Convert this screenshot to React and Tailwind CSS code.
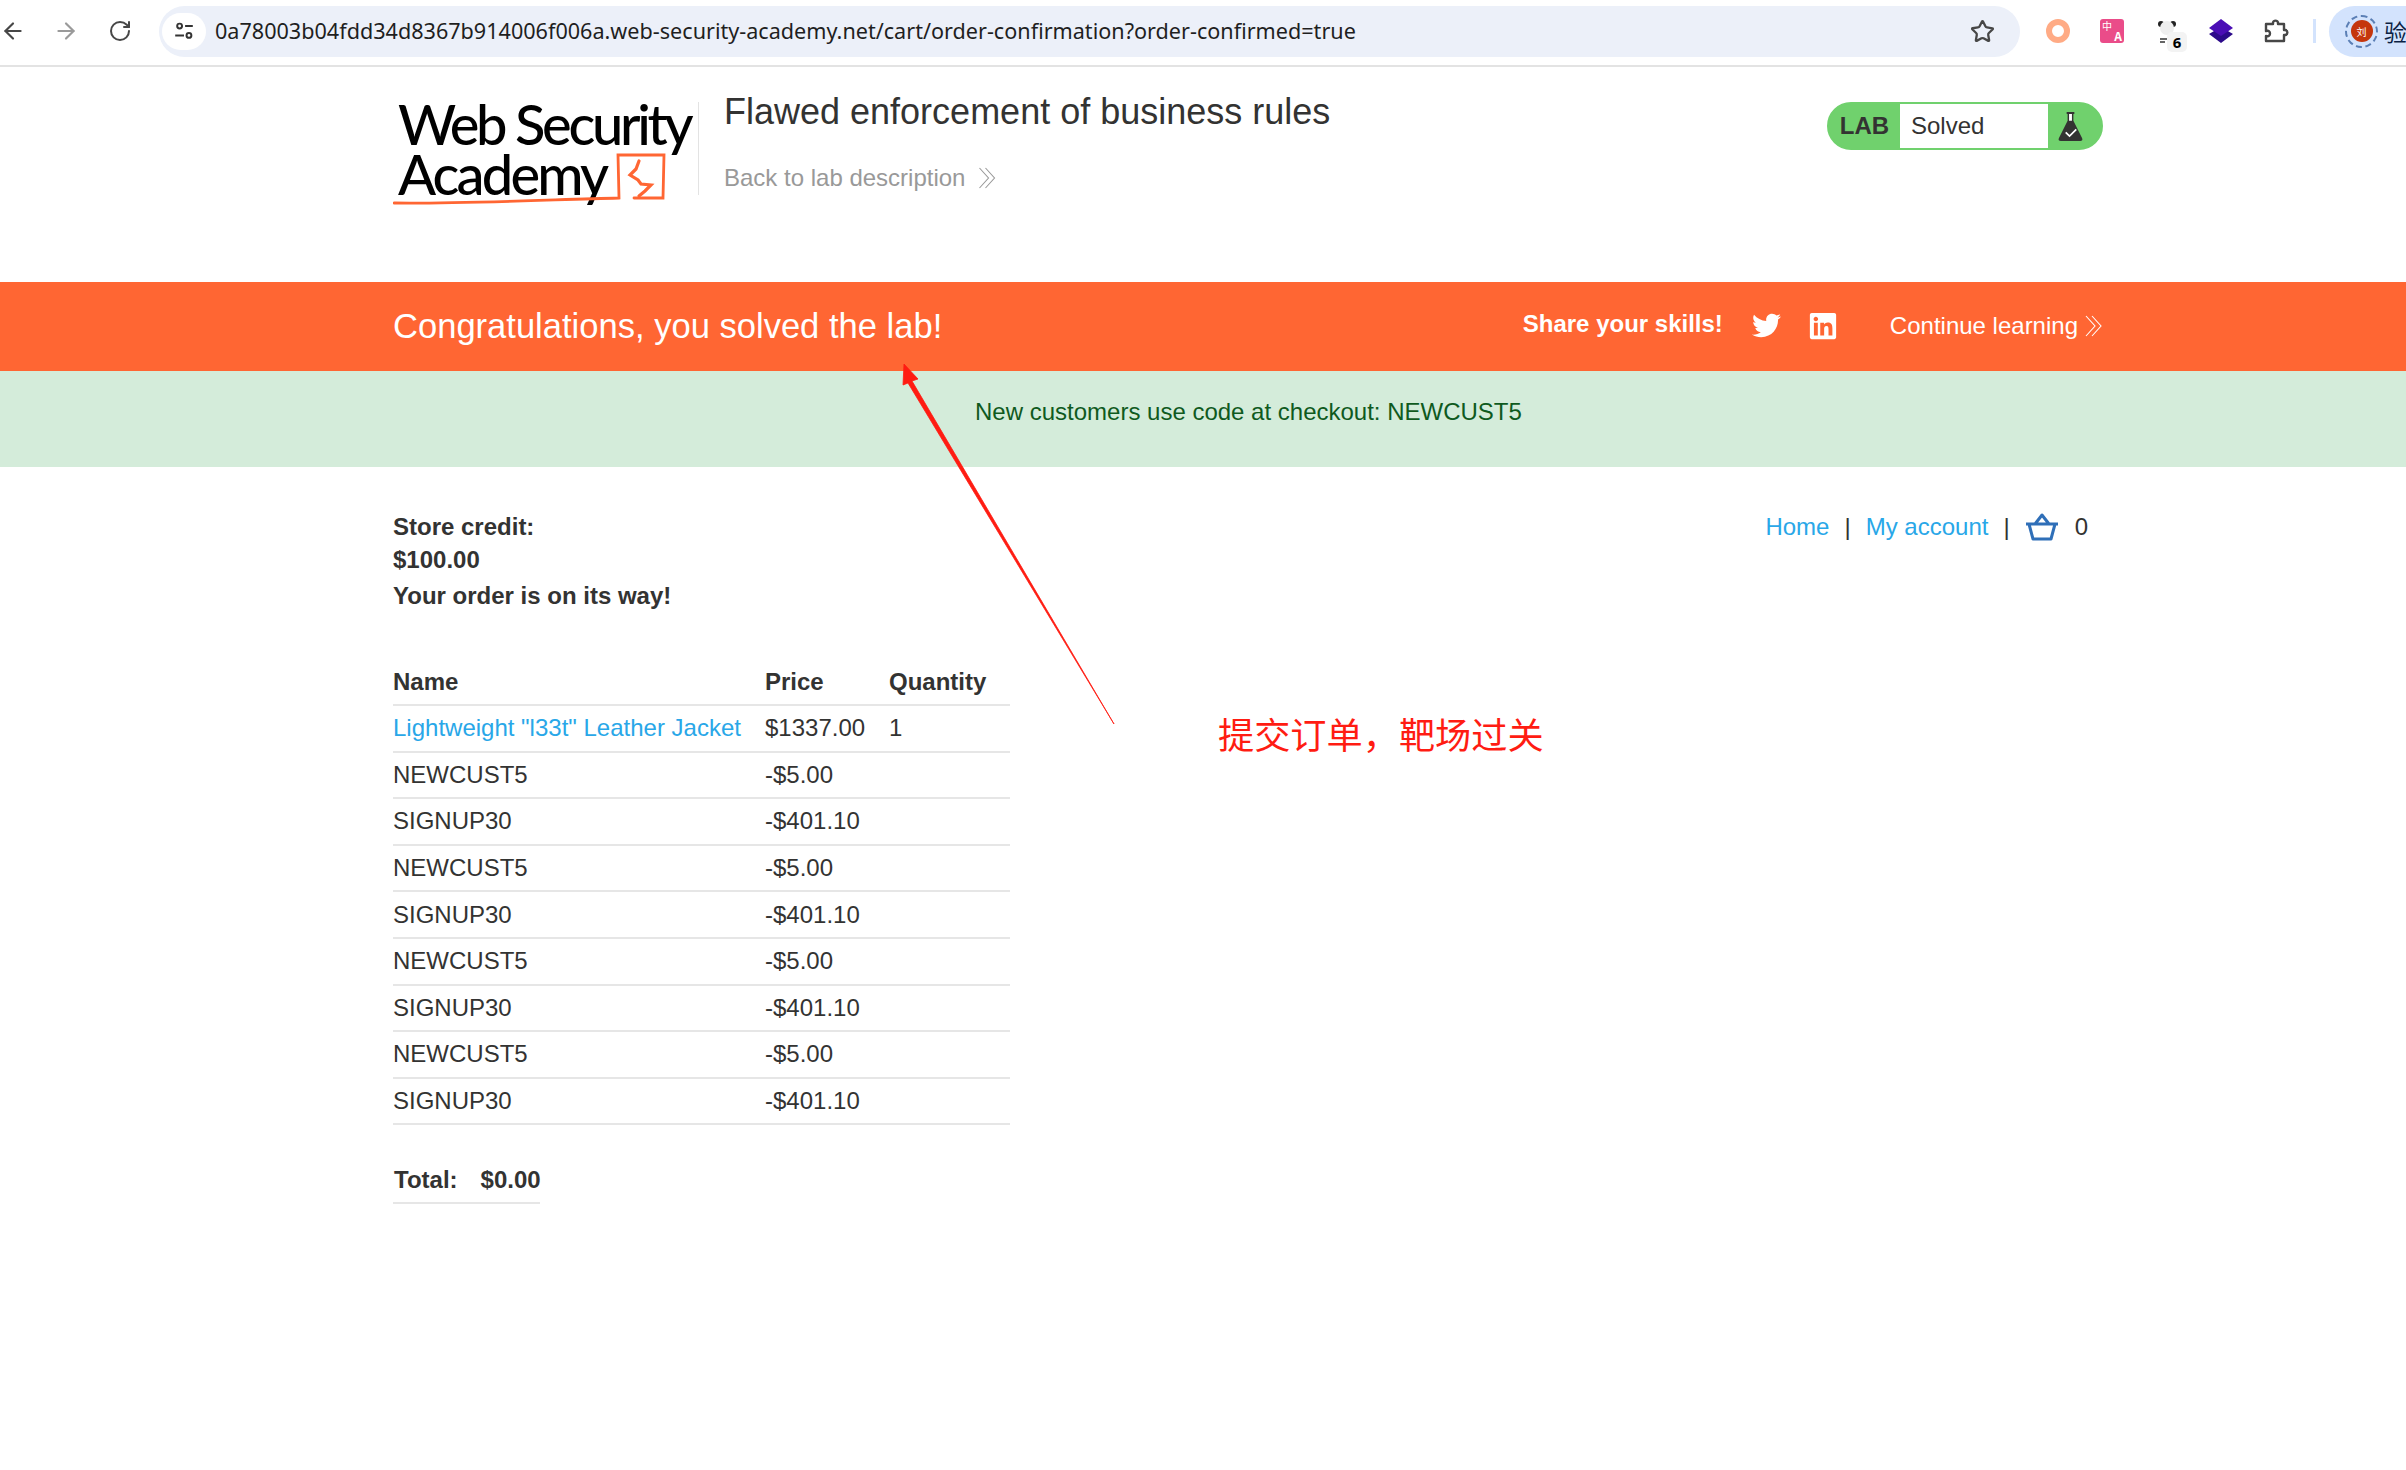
import React from "react";
import { FaTwitter, FaLinkedin } from "react-icons/fa";
import { ArrowLeft, ArrowRight, RotateCw, Star } from "lucide-react";

const orderRows = [
  { name: "NEWCUST5", price: "-$5.00" },
  { name: "SIGNUP30", price: "-$401.10" },
  { name: "NEWCUST5", price: "-$5.00" },
  { name: "SIGNUP30", price: "-$401.10" },
  { name: "NEWCUST5", price: "-$5.00" },
  { name: "SIGNUP30", price: "-$401.10" },
  { name: "NEWCUST5", price: "-$5.00" },
  { name: "SIGNUP30", price: "-$401.10" },
];

const Chevrons = ({ className }) => (
  <svg viewBox="0 0 18 24" fill="none" stroke="currentColor" strokeWidth="1.1" className={className}>
    <path d="M1 2l9 10-9 10M7 2l9 10-9 10" />
  </svg>
);

const BrowserBar = () => (
  <div className="h-[67px] flex items-center border-b-2 border-[#e3e3e3] bg-white pb-[3px] overflow-hidden">
    <ArrowLeft className="w-[26px] h-[26px] ml-0 text-[#474747]" strokeWidth={2} />
    <ArrowRight className="w-[26px] h-[26px] ml-[27px] text-[#9a9a9a]" strokeWidth={2} />
    <RotateCw className="w-[24px] h-[24px] ml-[29px] text-[#474747]" strokeWidth={2} />
    <div className="ml-[27px] w-[1861px] h-[51px] rounded-full bg-[#ecf0f9] flex items-center pl-[3px] pr-[25px]">
      <div className="w-[44px] h-[37px] rounded-full bg-white flex items-center justify-center">
        <svg viewBox="0 0 20 20" className="w-[22px] h-[22px] text-[#333]" fill="none" stroke="currentColor" strokeWidth="1.8">
          <circle cx="6" cy="5.5" r="2.2" />
          <path d="M11 5.5h7M2 14h8" />
          <circle cx="14.5" cy="14" r="2.2" />
        </svg>
      </div>
      <span className="ml-[9px] text-[21.6px] text-[#1f1f1f] font-['Noto_Sans',sans-serif] whitespace-nowrap">
        0a78003b04fdd34d8367b914006f006a.web-security-academy.net/cart/order-confirmation?order-confirmed=true
      </span>
      <Star className="ml-auto w-[25px] h-[25px] text-[#474747]" strokeWidth={2.2} />
    </div>
    <div className="ml-[26px] w-[24px] h-[24px] rounded-full border-[6px] border-[#ffab85]" />
    <div className="relative ml-[30px] w-[24px] h-[24px] rounded-[3px] bg-[#ea4c89] text-white font-['Noto_Sans_CJK_SC',sans-serif]">
      <span className="absolute left-[2px] top-[1px] text-[10px] leading-[11px]">中</span>
      <span className="absolute right-[2px] bottom-[1px] text-[12px] leading-[13px] font-bold">A</span>
    </div>
    <div className="relative ml-[34px] w-[18px] h-[24px] mr-[33px]">
      <svg viewBox="0 0 18 24" className="w-[18px] h-[24px]">
        <circle cx="3" cy="5" r="3" fill="#222" />
        <circle cx="15" cy="5" r="3" fill="#222" />
        <circle cx="9" cy="9" r="7" fill="#eee" />
        <path d="M2 20h7M2 23h5" stroke="#333" strokeWidth="1.5" />
      </svg>
      <span className="absolute left-[9px] top-[13px] w-[20px] h-[20px] rounded-[5px] bg-[#f3f3f3] text-[15px] font-bold leading-[20px] text-center text-black font-['Noto_Sans',sans-serif]">6</span>
    </div>
    <svg viewBox="0 0 24 24" className="w-[24px] h-[24px]">
      <path d="M12 8 24 15 12 24 0 15z" fill="#2c0a8a" />
      <path d="M12 0 24 9 12 17 0 9z" fill="#4a0db5" />
    </svg>
    <svg viewBox="0 0 26 26" className="ml-[30px] w-[26px] h-[26px]" fill="none" stroke="#474747" strokeWidth="2.4" strokeLinejoin="round">
      <path d="M3 6h7V4.500a2.600 2.600 0 0 1 5 0V6h6v6h1.500a2.600 2.600 0 0 1 0 5H21v6H3v-5c3 1 4-1 4-2.500s-1-3.500-4-2.500z" />
    </svg>
    <div className="ml-[24px] w-[3px] h-[24px] bg-[#d3e3fd]" />
    <div className="ml-[13px] flex-1 h-[51px] rounded-l-full bg-[#d3e3fd] flex items-center pl-[16px] overflow-hidden">
      <div className="shrink-0 w-[33px] h-[33px] rounded-full border-2 border-dashed border-[#5b7fb5] flex items-center justify-center">
        <div className="w-[22px] h-[22px] rounded-full bg-[#c5360d] text-[10px] text-white flex items-center justify-center font-['Noto_Sans_CJK_SC',sans-serif]">刘</div>
      </div>
      <span className="ml-[6px] text-[23px] text-[#0b1f44] whitespace-nowrap font-['Noto_Sans_CJK_SC',sans-serif]">验</span>
    </div>
  </div>
);

const Logo = () => (
  <div className="relative w-[300px] h-[125px] shrink-0 pt-[11px] text-black font-['Lato',sans-serif] font-medium text-[56px] leading-[50px] tracking-[-3.3px]">
    <div className="pl-[5px] whitespace-nowrap">Web Security</div>
    <div className="pl-[5px] whitespace-nowrap tracking-[-2.8px]">Academy</div>
    <svg viewBox="0 0 300 125" className="absolute left-0 top-0 w-[300px] h-[125px]" fill="none" stroke="#ff6633" strokeLinecap="round">
      <path d="M1 115c60 1 150-3 225-5l-1-43h46l-1 43h-29" strokeWidth="2.8" />
      <path d="M246 73l-3 8-6 6 8 5 3 4 10 1-6 6-6 5" strokeWidth="3.2" />
    </svg>
  </div>
);

const LabStatus = () => (
  <div className="w-[276px] h-[48px] flex rounded-full bg-[#70d16d] border-2 border-[#70d16d] overflow-hidden items-stretch">
    <div className="w-[71px] flex items-center justify-center font-bold text-[24px] text-[#333332]">LAB</div>
    <div className="w-[148px] bg-white flex items-center pl-[11px] text-[24px] text-[#333332]">Solved</div>
    <div className="flex-1 flex items-center pl-[10px]">
      <svg viewBox="0 0 26 32" className="w-[25px] h-[31px]">
        <path d="M9 1h8v2h-1v7l9 18c1 2 0 3-2 3H3c-2 0-3-1-2-3l9-18V3H9z" fill="#333332" />
        <path d="M11.500 3h3v7h-3z" fill="#fff" />
        <path d="M8 22l4 4 7-7" fill="none" stroke="#fff" strokeWidth="1.8" />
      </svg>
    </div>
  </div>
);

const Header = () => (
  <div className="h-[215px] pl-[393px] w-[2103px] flex items-start pt-[21px]">
    <Logo />
    <div className="ml-[5px] mt-[14px] w-px h-[93px] bg-[#e3e3e3]" />
    <div className="ml-[25px] flex-1">
      <h2 className="text-[36px] leading-[44px] mt-[2px] text-[#333332]">Flawed enforcement of business rules</h2>
      <div className="mt-[29px] flex items-center text-[24px] leading-[30px] text-[#999]">
        Back to lab description
        <Chevrons className="ml-[13px] w-[19px] h-[24px]" />
      </div>
    </div>
    <div className="mt-[14px]">
      <LabStatus />
    </div>
  </div>
);

const Banner = () => (
  <div className="h-[89px] bg-[#ff6633] text-white pl-[393px] w-full flex items-center">
    <div className="w-[1710px] flex items-center">
      <span className="text-[34.56px] mt-[1px]">Congratulations, you solved the lab!</span>
      <span className="ml-auto mr-[-1px] font-bold text-[24px] -mt-[5px]">Share your skills!</span>
      <FaTwitter className="ml-[30px] w-[29px] h-[29px] -mt-[2px]" />
      <FaLinkedin className="ml-[27px] w-[30px] h-[30px] -mt-[1px]" />
      <span className="ml-[52px] text-[24px] -mt-[1px]">Continue learning</span>
      <Chevrons className="ml-[7px] w-[18px] h-[24px] -mt-[1px]" />
    </div>
  </div>
);

const OrderTable = () => (
  <table className="mt-[46px] border-collapse text-[24px] text-[#333332]">
    <thead>
      <tr className="h-[46px] border-b-2 border-[#e6e6e6] font-bold text-left">
        <th className="w-[372px]">Name</th>
        <th className="w-[124px]">Price</th>
        <th className="w-[121px]">Quantity</th>
      </tr>
    </thead>
    <tbody>
      <tr className="h-[46.6px] border-b-2 border-[#e6e6e6]">
        <td className="text-[#29a7e8]">Lightweight "l33t" Leather Jacket</td>
        <td>$1337.00</td>
        <td>1</td>
      </tr>
      {orderRows.map((row, index) => (
        <tr key={index} className="h-[46.6px] border-b-2 border-[#e6e6e6]">
          <td>{row.name}</td>
          <td>{row.price}</td>
          <td />
        </tr>
      ))}
    </tbody>
  </table>
);

const Annotation = () => (
  <>
    <svg className="absolute left-0 top-0 w-[2406px] h-[1470px] pointer-events-none" viewBox="0 0 2406 1470">
      <path d="M904 364l14 15-6 2 202 343-206-341-5 2z" fill="#ff1c12" stroke="#ff1c12" strokeWidth="0.8" />
    </svg>
    <div className="absolute left-[1218px] top-[708px] text-[36.2px] leading-[50px] text-[#ff1c12] whitespace-nowrap font-['Noto_Sans_CJK_SC',sans-serif]">
      提交订单，靶场过关
    </div>
  </>
);

export default function App() {
  return (
    <div className="relative w-[2406px] h-[1470px] overflow-hidden bg-white font-['Liberation_Sans',sans-serif] text-[#333332]">
      <BrowserBar />
      <Header />
      <Banner />
      <div className="h-[96px] bg-[#d4ecda] pl-[975px] pt-[23px] text-[24px] leading-[36px] text-[#0f5a1e]">
        New customers use code at checkout: NEWCUST5
      </div>
      <div className="w-[2103px] pl-[393px] pt-[43px] flex justify-between items-start text-[24px]">
        <div>
          <div className="font-bold leading-[33px]">Store credit:</div>
          <div className="font-bold leading-[33px]">$100.00</div>
          <div className="mt-[3px] font-bold leading-[34px]">Your order is on its way!</div>
          <OrderTable />
          <div className="mt-[38px] w-[147px] pb-[5px] border-b-2 border-[#e6e6e6] flex font-bold leading-[34px] pl-px">
            <span>Total:</span>
            <span className="ml-[23px]">$0.00</span>
          </div>
        </div>
        <div className="flex items-center leading-[34px] pr-[15px]">
          <span className="text-[#29a7e8]">Home</span>
          <span className="ml-[15px]">|</span>
          <span className="ml-[15px] text-[#29a7e8]">My account</span>
          <span className="ml-[15px]">|</span>
          <svg viewBox="0 0 34 28" className="ml-[15px] w-[34px] h-[28px]" fill="none" stroke="#2f6fb8" strokeWidth="3" strokeLinejoin="round">
            <path d="M1 11h32M4 11l4 15h18l4-15M10 11l7-9 7 9" />
          </svg>
          <span className="ml-[16px]">0</span>
        </div>
      </div>
      <Annotation />
    </div>
  );
}
